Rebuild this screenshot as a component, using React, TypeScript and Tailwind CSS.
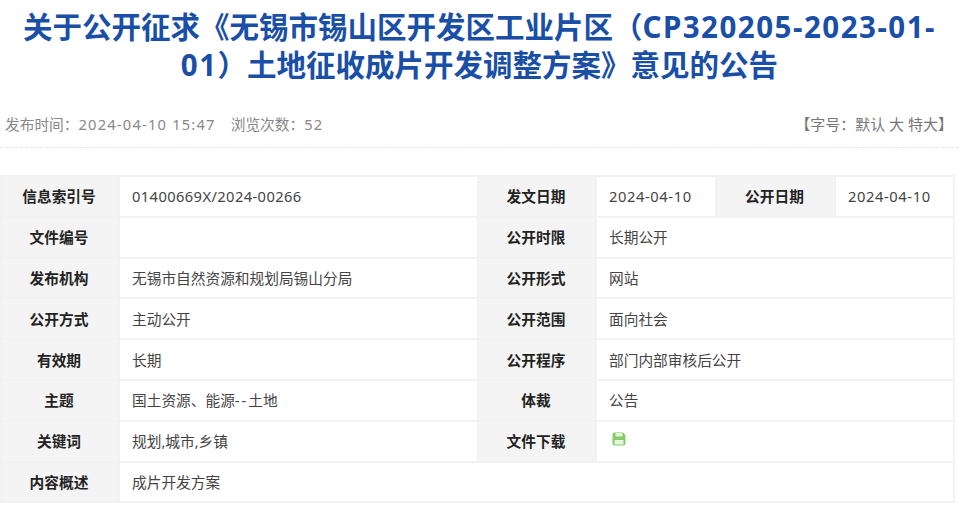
const cjk = "font-['Noto_Sans','Noto_Sans_CJK_SC',sans-serif]"

function Label({ children }: { children: React.ReactNode }) {
  return (
    <td className="bg-[#f4f4f4] border-2 border-[#f2f2f2] text-center font-bold text-[#222] p-0 pr-[2px]">
      {children}
    </td>
  )
}

function Value({ children, span }: { children?: React.ReactNode; span?: number }) {
  return (
    <td colSpan={span} className="border-2 border-[#f2f2f2] text-[#444] pl-[12px] p-0">
      {children}
    </td>
  )
}

function Num({ children }: { children: React.ReactNode }) {
  return <span className="tracking-[0.6px]">{children}</span>
}

function SaveIcon() {
  return (
    <svg width="14" height="14" viewBox="0 0 14 14" className="mb-[5px] ml-[3px]">
      <path d="M2.5 0.5H11L13.5 3V11.5a2 2 0 0 1-2 2h-9a2 2 0 0 1-2-2v-9a2 2 0 0 1 2-2z" fill="#84cc66" />
      <rect x="3.5" y="1" width="7" height="3.5" rx="0.5" fill="#e4f5dc" />
      <rect x="2.5" y="8" width="9" height="4.5" rx="0.5" fill="#e4f5dc" />
    </svg>
  )
}

export default function App() {
  return (
    <div className={`${cjk} w-[959px] h-[511px] bg-white overflow-hidden relative`}>
      <h1 className="text-[29.5px] leading-[38px] font-bold text-[#1a4fa8] text-center pt-[8px] px-[14px]">
        关于公开征求《无锡市锡山区开发区工业片区（<span className="tracking-[1.5px]">CP320205-2023-01-01</span>）土地征收成片开发调整方案》意见的公告
      </h1>
      <div className="flex justify-between mt-[29px] pl-[5px] pr-[6px] h-[35px] text-[14.7px] leading-[22px] text-[#888] border-b border-dashed border-[#e6e6e6]">
        <div className="flex gap-[15px]">
          <span>
            发布时间：<span className="tracking-[1.2px]">2024-04-10 15:47</span>
          </span>
          <span>
            浏览次数：<span className="tracking-[1.2px]">52</span>
          </span>
        </div>
        <div className="text-[15px] text-[#777]">【字号：默认 大 特大】</div>
      </div>
      <table className="mt-[27px] w-[953px] table-fixed border-collapse text-[14.7px] leading-[20px]">
        <colgroup>
          <col className="w-[118px]" />
          <col className="w-[359px]" />
          <col className="w-[118px]" />
          <col className="w-[120px]" />
          <col className="w-[119px]" />
          <col className="w-[119px]" />
        </colgroup>
        <tbody>
          <tr className="h-[40.8px]">
            <Label>信息索引号</Label>
            <Value>
              <span className="tracking-[0.4px]">01400669X/2024-00266</span>
            </Value>
            <Label>发文日期</Label>
            <Value>
              <Num>2024-04-10</Num>
            </Value>
            <Label>公开日期</Label>
            <Value>
              <Num>2024-04-10</Num>
            </Value>
          </tr>
          <tr className="h-[40.8px]">
            <Label>文件编号</Label>
            <Value />
            <Label>公开时限</Label>
            <Value span={3}>长期公开</Value>
          </tr>
          <tr className="h-[40.8px]">
            <Label>发布机构</Label>
            <Value>无锡市自然资源和规划局锡山分局</Value>
            <Label>公开形式</Label>
            <Value span={3}>网站</Value>
          </tr>
          <tr className="h-[40.8px]">
            <Label>公开方式</Label>
            <Value>主动公开</Value>
            <Label>公开范围</Label>
            <Value span={3}>面向社会</Value>
          </tr>
          <tr className="h-[40.8px]">
            <Label>有效期</Label>
            <Value>长期</Value>
            <Label>公开程序</Label>
            <Value span={3}>部门内部审核后公开</Value>
          </tr>
          <tr className="h-[40.8px]">
            <Label>主题</Label>
            <Value>
              国土资源、能源<span className="tracking-[2px]">--</span>土地
            </Value>
            <Label>体裁</Label>
            <Value span={3}>公告</Value>
          </tr>
          <tr className="h-[40.8px]">
            <Label>关键词</Label>
            <Value>规划,城市,乡镇</Value>
            <Label>文件下载</Label>
            <Value span={3}>
              <SaveIcon />
            </Value>
          </tr>
          <tr className="h-[40.8px]">
            <Label>内容概述</Label>
            <Value span={5}>成片开发方案</Value>
          </tr>
        </tbody>
      </table>
    </div>
  )
}
